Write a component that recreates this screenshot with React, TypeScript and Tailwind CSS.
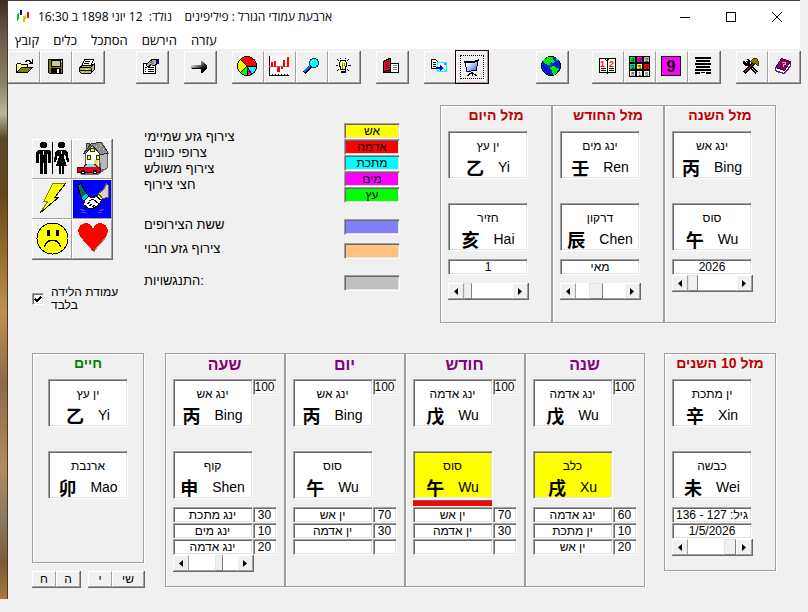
import type { ReactNode } from "react";

const sunken =
  "border border-t-[#a0a0a0] border-l-[#a0a0a0] border-r-white border-b-white shadow-[inset_1px_1px_0_#696969,inset_-1px_-1px_0_#e3e3e3]";
const raised =
  "border border-t-white border-l-white border-r-[#a0a0a0] border-b-[#a0a0a0] bg-[#f0f0f0]";
const raisedGroup = "flex border-r border-b border-[#696969]";
const etched = "border border-[#a0a0a0] shadow-[inset_1px_1px_0_#fff,1px_1px_0_#fff]";

function Icon({ children, size = 32 }: { children: ReactNode; size?: number }) {
  return (
    <svg width={size} height={size} viewBox={`0 0 ${size} ${size}`} shapeRendering="crispEdges" aria-hidden="true" className="-m-px block">
      {children}
    </svg>
  );
}

const OpenIcon = () => (
  <Icon>
    <path d="M17 10.500h1.500v-1h3v1h1v1h1M24.500 8v5M21 12.500h4" fill="none" stroke="#000" />
    <path d="M8.500 21.500V13.500L9.500 12.500H12.500L13.500 13.500H19.500V16.500H13.500L8.500 21.500Z" fill="#ffff80" stroke="#000" />
    <path d="M8.500 21.500L13.500 16.500H24.500L19.500 21.500Z" fill="#808000" stroke="#000" />
  </Icon>
);
const SaveIcon = () => (
  <Icon>
    <path d="M8.500 8.500h14v14h-13l-1-1Z" fill="#808000" stroke="#000" />
    <path d="M11 9h9v6h-9z" fill="#c8c8a0" stroke="#000" />
    <path d="M11 17h10v5H11z" />
    <path d="M17 18h2v4h-2z" fill="#f0f0f0" />
    <path d="M21 10h1v1h-1z" fill="#fff" />
  </Icon>
);
const PrintIcon = () => (
  <Icon>
    <path d="M12.500 8.500h9l-3 7h-9Z" fill="#fff" stroke="#000" />
    <path d="M13 10.500h5M12 12.500h5" stroke="#000" />
    <path d="M7.500 16.500l3-2h9l3-2v6l-4 4h-9l-2-2Z" fill="#b8b878" stroke="#000" />
    <path d="M8 16.500h11M8 19.500h11M19 17v5M19 16l3-3" stroke="#000" />
    <path d="M13 18h4v1h-4z" fill="#ffff00" />
  </Icon>
);
const PropertiesIcon = () => (
  <Icon>
    <path d="M7.500 12.500h12v10h-12z" fill="#fff" stroke="#000" />
    <path d="M9 16.500h2M12 16.500h6M9 18.500h1M12 18.500h6M9 20.500h1M12 20.500h6" stroke="#000" />
    <path d="M10 14l4-4 3-2h4v5l-4 2-2-2-2 3-2-1Z" fill="#b0b0b0" stroke="#000" />
    <path d="M20 8h3v5h-3z" fill="#000080" />
    <path d="M14 12l3-2M15 14l3-3" stroke="#606060" />
  </Icon>
);
const ArrowIcon = () => (
  <Icon>
    <defs>
      <linearGradient id="arrow" x1="0" x2="1" y1="0" y2="1">
        <stop offset="0.200" stopColor="#d0d0d0" />
        <stop offset="0.700" stopColor="#000" />
      </linearGradient>
    </defs>
    <path d="M7 14h10v-4h1l5 5v2l-5 5h-1v-4H7z" fill="url(#arrow)" />
    <path d="M8 17h9v1H8zM17 17h5l-4 4h-1z" />
  </Icon>
);
const PieIcon = () => (
  <Icon>
    <circle cx="15" cy="15" r="10" fill="#ffff00" />
    <path d="M15 15L8 8A10 10 0 0 1 25 15Z" fill="#f00" />
    <path d="M15 15H25A10 10 0 0 1 20 24Z" fill="#0ff" />
    <path d="M15 15L20 24A10 10 0 0 1 15 25Z" fill="#f0f" />
    <path d="M15 15V25A10 10 0 0 1 8 22Z" fill="#0f0" />
    <circle cx="15" cy="15" r="9.500" fill="none" stroke="#000" />
    <path d="M8 8l7 7h10M15 15l5 9M15 15v10M15 15l-7 7" fill="none" stroke="#000" />
  </Icon>
);
const ChartIcon = () => (
  <Icon>
    <path d="M5 5h20v20H5z" fill="#fff" />
    <path d="M5.500 5v20M5 24.500h20M8.500 23v2M11.500 23v2M14.500 23v2M17.500 23v2M20.500 23v2M23.500 23v2" stroke="#000" />
    <path d="M5 15.500h20" stroke="#808080" />
    <path d="M7 11h2v5H7zM10 10h2v6h-2zM13 16h3v5h-3zM17 16h2v2h-2zM19 9h2v7h-2zM23 6h2v10h-2z" fill="#f00" />
  </Icon>
);
const MagnifierIcon = () => (
  <Icon>
    <path d="M8 22l8-8" stroke="#000" strokeWidth="4" />
    <path d="M8 21l8-8" stroke="#0070ff" strokeWidth="2" />
    <circle cx="18" cy="12" r="4.500" fill="#0ff" stroke="#004060" />
    <path d="M16 9.500h2M15.500 10v2" stroke="#fff" />
  </Icon>
);
const BulbIcon = () => (
  <Icon>
    <path d="M12.500 18.500v-2l-1-2v-3l1.500-2h4l1.500 2v3l-1 2v2Z" fill="#ffff80" stroke="#000" />
    <path d="M14.500 12v6M16.500 12v3" stroke="#808000" />
    <path d="M13 18h5v4h-5z" />
    <path d="M13 19.500h4" stroke="#fff" />
    <path d="M8 14.500h2M20 14.500h3M9 8l2 2M21 8l-2 2M9 20l2-2M21 20l-2-2M12.500 7v1M17.500 7v1" stroke="#000" />
  </Icon>
);
const RedBookIcon = () => (
  <Icon>
    <path d="M14.500 12.500h8v9h-10Z" fill="#fff" stroke="#000" />
    <path d="M17 14.500h4M17 16.500h4M17 18.500h4" stroke="#808080" />
    <path d="M7.500 10.500l6-3h1v11l-7 2Z" fill="#e01030" stroke="#000" />
    <path d="M7.500 20.500l7-2v3h-7Z" fill="#800018" stroke="#000" />
    <path d="M9 12l4-2M9 14l4-2M9 16l4-2M9 18l4-2" stroke="#800018" />
  </Icon>
);
const ExportIcon = () => (
  <Icon>
    <path d="M7.500 8.500h4l2 2v7h-6z" fill="#fff" stroke="#000" />
    <path d="M9 11.500h3M9 13.500h3M9 15.500h3" stroke="#000" />
    <path d="M13.500 11.500h9v9h-9z" fill="#e8ffff" stroke="#0ff" />
    <path d="M14 20l4-4 4 4" fill="none" stroke="#0ff" />
    <path d="M20 12h2v2h-2z" fill="#8060c0" />
    <path d="M12 16h4v-2l3 3-3 3v-2h-4z" fill="#0000e0" />
  </Icon>
);
const ScreenIcon = () => (
  <Icon>
    <defs>
      <linearGradient id="screen" x1="0" x2="1" y1="0" y2="1">
        <stop offset="0.200" stopColor="#fff" />
        <stop offset="1" stopColor="#3050e0" />
      </linearGradient>
    </defs>
    <path d="M9.500 11.500l12-1-1 9-10 1Z" fill="url(#screen)" stroke="#000060" />
    <path d="M8 10h10l5-2v2l-5 2H8z" />
    <path d="M15 21h2v2h-2zM13 22h5v1h-5zM12 23h2v1h-2zM11 24h2v1h-2zM18 23h2v1h-2zM19 24h2v1h-2zM16 23h1v2h-1z" />
  </Icon>
);
const GlobeIcon = () => (
  <Icon>
    <circle cx="15" cy="15" r="9.500" fill="#0020e0" stroke="#000" />
    <path d="M9 8l3-2h4l2 1-2 1 3 2-2 2-2-1-1 2 1 2-3-1-3-1-2-2v-2Z" fill="#0e0" />
    <path d="M14 16l4-1 3 2 2 1-2 3-3 3h-1l-1-4-2-2Z" fill="#0e0" />
    <path d="M20 7l2 2 1 3-2-2Z" fill="#0e0" />
  </Icon>
);
const CalendarIcon = () => (
  <Icon>
    <path d="M7.500 7.500h16v14h-16z" fill="#fff" stroke="#000" />
    <path d="M15.500 8v15M13 8l2 2 2-2M9 17.500h5M9 19.500h5M17 17.500h5M17 19.500h5" fill="none" stroke="#000" />
    <text x="8" y="16" fontSize="9" fontWeight="bold" fill="#f00" className="font-['Liberation_Sans',sans-serif]">1</text>
    <text x="17" y="16" fontSize="9" fontWeight="bold" fill="#f00" className="font-['Liberation_Sans',sans-serif]">2</text>
  </Icon>
);
const squareCells = [
  ["4", "#00e040"], ["9", "#f0f"], ["2", "#c0c0c0"],
  ["3", "#00e090"], ["5", "#ff0"], ["7", "#f00"],
  ["8", "#fff"], ["1", "#fff"], ["6", "#fff"],
];
const LoShuIcon = () => (
  <Icon>
    <path d="M5 5h21v21H5z" />
    {squareCells.map(([n, color], i) => (
      <g key={n}>
        <rect x={6 + (i % 3) * 7} y={6 + Math.floor(i / 3) * 7} width="5" height="5" fill={color} />
        <text x={7 + (i % 3) * 7} y={11 + Math.floor(i / 3) * 7} fontSize="6" className="font-['Liberation_Sans',sans-serif]">{n}</text>
      </g>
    ))}
  </Icon>
);
const NineIcon = () => (
  <Icon>
    <path d="M5.500 5.500h19v19h-19z" fill="#f0f" stroke="#000" />
    <text x="15" y="21" textAnchor="middle" fontSize="16" fontWeight="bold" className="font-['Liberation_Sans',sans-serif]">9</text>
  </Icon>
);
const HexagramIcon = () => (
  <Icon>
    <path d="M7 6h16v2H7zM8 9h14v2H8zM7 12h16v2H7zM8 15h14v2H8zM7 18h16v2H7zM7 21h5v2H7zM13 21h4v1h-4zM18 21h5v2h-5z" />
  </Icon>
);
const ToolsIcon = () => (
  <Icon>
    <path d="M10 11l11 11" stroke="#000" strokeWidth="3" />
    <path d="M10 11l11 11" stroke="#c0c0c0" />
    <path d="M7 10h2v2h3v-2l-2-2h2l2 2v3l-2 2H9l-2-2Z" />
    <path d="M8 22l10-10" stroke="#000" strokeWidth="3" />
    <path d="M9 21l8-8" stroke="#a04020" />
    <path d="M14.500 10.500l3-3h3l2 3v4h-1l-2-2h-2Z" fill="#808000" stroke="#404000" />
  </Icon>
);
const PurpleBookIcon = () => (
  <Icon>
    <path d="M7.500 17.500l6-9 9 3v4l-6 7-9-3Z" fill="#fff" stroke="#404040" />
    <path d="M7.500 16.500l6-9 9 3-6 9Z" fill="#800080" stroke="#300030" />
    <path d="M8 20.500l8 2 6-7" fill="none" stroke="#800080" />
    <path d="M14 11.500h3v2h-2v2" fill="none" stroke="#ffc000" />
  </Icon>
);

const PeopleIcon = () => (
  <Icon size={40}>
    <circle cx="11.500" cy="6" r="3.500" />
    <path d="M6 11h11l2 2v11h-3v-9h-1v20h-3V24h-1v11H8V15H7v9H4V13Z" />
    <path d="M20 3h1v32h-1z" />
    <circle cx="29.500" cy="6" r="3.500" />
    <path d="M25 11h9l2 3 1 9h-2l-2-8-1 3 3 9h-3v8h-2v-8h-1v8h-2v-8h-3l3-9-1-3-2 8h-2l1-9Z" />
    <path d="M11 12l1 4M29 12l1 3" stroke="#f0f0f0" />
  </Icon>
);
const HouseIcon = () => (
  <Icon size={40}>
    <path d="M27.500 14.500h8v14l-7 5Z" fill="#b8b8b8" stroke="#606060" />
    <path d="M13.500 12.500l6-6 8 8v17h-14Z" fill="#fff" stroke="#606060" />
    <path d="M14.500 4.500h3v6h-3z" fill="#a0a0a0" stroke="#303030" />
    <path d="M11.500 14.500l8-10 10-1 7 11-8 1-8-9-7 8Z" fill="#909090" stroke="#303030" />
    <path d="M24 7h1v1h-1zM28 6h1v1h-1zM27 9h1v1h-1zM31 10h1v1h-1z" fill="#e0e0e0" />
    <path d="M18.500 10.500l1-1h2l1 1v2h-4zM15.500 16.500h3v4h-3zM24.500 16.500h3v4h-3z" fill="#ff0" stroke="#303030" />
    <path d="M22 21h4v6h-4z" fill="#e0e060" />
    <path d="M34 30l-8 6H10l-4-3 12-3Z" fill="#707070" />
    <path d="M5.500 28.500h6l2-3h10l3 3 2 1v4h-23Z" fill="#e00018" stroke="#600010" />
    <path d="M12 28l3-3h7l2 3Z" fill="#70e8e8" />
    <circle cx="11" cy="33" r="2.500" />
    <circle cx="23" cy="33" r="2.500" />
    <path d="M10 33h2M22 33h2" stroke="#fff" />
  </Icon>
);
const LightningIcon = () => (
  <Icon size={40}>
    <path d="M21 4H34L23 18H27L8 34L16 22H12Z" fill="#ff0" stroke="#808000" />
    <path d="M34 4L23 18H27L8 34" fill="none" stroke="#000" />
  </Icon>
);
const HandshakeIcon = () => (
  <Icon size={40}>
    <path d="M0 0h40v40H0z" fill="#00f" />
    <path d="M5.500 6.500l3-2 7 11-6 4Z" fill="#006860" stroke="#000" />
    <path d="M34.500 4.500l2 2v12l-6 1-4-5 5-4Z" fill="#d8d0c0" stroke="#606060" />
    <path d="M9 19l5-4 2 2-4 5Z" fill="#0cc" />
    <path d="M26.500 15.500l4 4-2 3-4-4Z" fill="#ff0" stroke="#404000" />
    <path d="M12.500 21.500l4-4 4 1 4-1 5 4-3 5-6 3h-4l-5-4Z" fill="#fff" stroke="#000" />
    <path d="M17 22l4-2 6 5M15 25l3-2M17 27l3-2M20 28l3-2" fill="none" stroke="#000" />
    <path d="M8 30l5 2M9 33h5M32 30l-5 2M30 33h-4" stroke="#606070" />
  </Icon>
);
const SadIcon = () => (
  <Icon size={40}>
    <circle cx="20.500" cy="19.500" r="15.500" fill="#ff0" stroke="#000" />
    <ellipse cx="16.500" cy="14" rx="2" ry="3.500" />
    <ellipse cx="25.500" cy="14" rx="2" ry="3.500" />
    <path d="M12.500 28c2-9 14-9 16 0" fill="none" stroke="#000" strokeWidth="1.500" />
  </Icon>
);
const HeartIcon = () => (
  <Icon size={40}>
    <path d="M22 34C20 27 8 21 8 13c0-9 12-10 14-1 2-9 14-8 14 1 0 8-12 14-14 21Z" fill="#909090" />
    <path d="M21 33C19 26 6 20 6 12c0-9 13-11 15-2 2-9 15-7 15 2 0 8-13 14-15 21Z" fill="#f00" />
  </Icon>
);

function Tool({ label, focused, children }: { label: string; focused?: boolean; children: ReactNode }) {
  return (
    <button
      aria-label={label}
      className={`size-8 shrink-0 ${raised} ${focused ? "outline outline-[#200] before:absolute before:inset-[3px] before:border before:border-dotted before:border-black relative" : ""}`}
    >
      {children}
    </button>
  );
}

function TitleBar() {
  return (
    <header className="bg-white font-['Open_Sans','Liberation_Sans',sans-serif]">
      <div className="flex h-8 items-center">
        <svg width="14" height="14" viewBox="0 0 14 14" shapeRendering="crispEdges" className="ml-2 shrink-0" aria-hidden="true">
          <path d="M1 4h1v7H1zM2 3h1v6H2z" fill="#0c0" />
          <path d="M4 0h2v5H4z" fill="#000080" />
          <path d="M7 6h2v6H7zM9 5h1v4H9z" fill="#cc0" />
          <path d="M11 2h2v6h-2z" fill="#f00" />
        </svg>
        <h1 dir="rtl" className="ml-2 text-xs whitespace-pre text-black">
          ארבעת עמודי הגורל : פיליפינים{"    "}נולד:{"  "}12 יוני 1898 ב 16:30
        </h1>
        <div className="ml-auto flex">
          <button aria-label="מזער" className="flex h-7 w-[46px] items-center justify-center">
            <span className="h-px w-[10px] bg-black" />
          </button>
          <button aria-label="הגדל" className="flex h-7 w-[46px] items-center justify-center">
            <span className="size-[10px] border border-black" />
          </button>
          <button aria-label="סגור" className="flex h-7 w-[46px] items-center justify-center">
            <svg width="10" height="10" viewBox="0 0 10 10" aria-hidden="true">
              <path d="M0 0l10 10M10 0L0 10" stroke="#000" />
            </svg>
          </button>
        </div>
      </div>
      <nav className="flex h-4 items-center gap-[14px] px-[7px] text-[13px] text-black">
        {["קובץ", "כלים", "הסתכל", "הירשם", "עזרה"].map((item) => (
          <button key={item}>{item}</button>
        ))}
      </nav>
    </header>
  );
}

function Toolbar() {
  return (
    <div className="mt-[2px] flex">
      <div className={raisedGroup}>
        <Tool label="פתח"><OpenIcon /></Tool>
        <Tool label="שמור"><SaveIcon /></Tool>
        <Tool label="הדפס"><PrintIcon /></Tool>
      </div>
      <div className={`${raisedGroup} ml-[31px]`}>
        <Tool label="מאפיינים"><PropertiesIcon /></Tool>
      </div>
      <div className={`${raisedGroup} ml-[15px]`}>
        <Tool label="הבא"><ArrowIcon /></Tool>
      </div>
      <div className={`${raisedGroup} ml-[15px]`}>
        <Tool label="יסודות"><PieIcon /></Tool>
        <Tool label="תרשים"><ChartIcon /></Tool>
        <Tool label="חיפוש"><MagnifierIcon /></Tool>
        <Tool label="רעיון"><BulbIcon /></Tool>
      </div>
      <div className={`${raisedGroup} ml-[15px]`}>
        <Tool label="ספר"><RedBookIcon /></Tool>
      </div>
      <div className={`${raisedGroup} ml-[15px]`}>
        <Tool label="ייצוא"><ExportIcon /></Tool>
        <Tool label="מצגת" focused><ScreenIcon /></Tool>
      </div>
      <div className={`${raisedGroup} ml-[47px]`}>
        <Tool label="עולם"><GlobeIcon /></Tool>
      </div>
      <div className={`${raisedGroup} ml-[23px]`}>
        <Tool label="לוח שנה"><CalendarIcon /></Tool>
        <Tool label="ריבוע"><LoShuIcon /></Tool>
        <Tool label="תשע"><NineIcon /></Tool>
        <Tool label="הקסגרמה"><HexagramIcon /></Tool>
      </div>
      <div className={`${raisedGroup} ml-[15px]`}>
        <Tool label="כלים"><ToolsIcon /></Tool>
        <Tool label="עזרה"><PurpleBookIcon /></Tool>
      </div>
    </div>
  );
}

type Sign = { name: string; glyph: string; latin: string; highlight?: boolean };

function Card({ sign }: { sign: Sign }) {
  return (
    <div className={`flex h-12 w-20 flex-col items-center pt-[6px] text-black ${sunken} ${sign.highlight ? "bg-[#ff0]" : "bg-white"}`}>
      <span dir="rtl" className="text-xs leading-4">{sign.name}</span>
      <div className="flex h-[26px] items-center gap-[14px]">
        <span className="font-['Noto_Sans_CJK_TC',sans-serif] text-lg leading-6 font-bold">{sign.glyph}</span>
        <span className="pt-px text-sm leading-6">{sign.latin}</span>
      </div>
    </div>
  );
}

function Field({ label, value, className }: { label: string; value: string; className: string }) {
  return (
    <input
      readOnly
      dir="rtl"
      aria-label={label}
      value={value}
      className={`block h-4 bg-white text-center text-xs leading-3 text-black outline-none ${sunken} ${className}`}
    />
  );
}

function Scroller({ label, value, thumb }: { label: string; value: number; thumb: string }) {
  const arrow = `flex h-full w-4 shrink-0 items-center justify-center ${raised}`;
  return (
    <div className="flex h-[17px] w-[81px] border-r border-b border-[#696969] bg-white">
      <button aria-label={`${label} -`} className={arrow}>
        <svg width="4" height="7" viewBox="0 0 4 7" aria-hidden="true"><path d="M4 0v7L0 3.500Z" /></svg>
      </button>
      <input
        type="range"
        aria-label={label}
        defaultValue={value}
        className={`m-0 h-full w-12 appearance-none border-b border-[#a0a0a0] bg-white [&::-webkit-slider-thumb]:h-4 [&::-webkit-slider-thumb]:appearance-none [&::-webkit-slider-thumb]:border [&::-webkit-slider-thumb]:border-t-[#e3e3e3] [&::-webkit-slider-thumb]:border-l-[#e3e3e3] [&::-webkit-slider-thumb]:border-r-[#808080] [&::-webkit-slider-thumb]:border-b-[#808080] [&::-webkit-slider-thumb]:bg-[#f0f0f0] ${thumb}`}
      />
      <button aria-label={`${label} +`} className={arrow}>
        <svg width="4" height="7" viewBox="0 0 4 7" aria-hidden="true"><path d="M0 0v7l4-3.500Z" /></svg>
      </button>
    </div>
  );
}

function LuckPanel({ title, titleClass, signs, inset, children, height }: {
  title: string; titleClass: string; signs: Sign[]; inset: string; height: string; children?: ReactNode;
}) {
  return (
    <section className={`w-28 shrink-0 ${etched} ${inset} ${height}`}>
      <h2 className={`h-[25px] w-24 text-center text-sm leading-[18px] font-bold whitespace-nowrap ${titleClass}`}>{title}</h2>
      <Card sign={signs[0]} />
      <div className="h-6" />
      <Card sign={signs[1]} />
      {children && <div className="pt-2">{children}</div>}
    </section>
  );
}

type Pillar = { title: string; signs: Sign[]; clash?: boolean; hidden: [string, string][]; scroll?: boolean };

const pillars: Pillar[] = [
  {
    title: "שעה",
    signs: [{ name: "ינג אש", glyph: "丙", latin: "Bing" }, { name: "קוף", glyph: "申", latin: "Shen" }],
    hidden: [["ינג מתכת", "30"], ["ינג מים", "10"], ["ינג אדמה", "20"]],
    scroll: true,
  },
  {
    title: "יום",
    signs: [{ name: "ינג אש", glyph: "丙", latin: "Bing" }, { name: "סוס", glyph: "午", latin: "Wu" }],
    hidden: [["ין אש", "70"], ["ין אדמה", "30"], ["", ""]],
  },
  {
    title: "חודש",
    signs: [{ name: "ינג אדמה", glyph: "戊", latin: "Wu" }, { name: "סוס", glyph: "午", latin: "Wu", highlight: true }],
    clash: true,
    hidden: [["ין אש", "70"], ["ין אדמה", "30"], ["", ""]],
  },
  {
    title: "שנה",
    signs: [{ name: "ינג אדמה", glyph: "戊", latin: "Wu" }, { name: "כלב", glyph: "戌", latin: "Xu", highlight: true }],
    hidden: [["ינג אדמה", "60"], ["ין מתכת", "10"], ["ין אש", "20"]],
  },
];

function PillarPanel({ pillar }: { pillar: Pillar }) {
  return (
    <section className={`h-[234px] w-[120px] shrink-0 pl-[7px] ${etched}`}>
      <h2 className="h-[25px] w-[104px] text-center text-base leading-[22px] font-bold text-[#800080]">{pillar.title}</h2>
      <div className="flex items-start">
        <Card sign={pillar.signs[0]} />
        <Field label={`${pillar.title} אחוז`} value="100" className="w-6" />
      </div>
      <div className="h-6" />
      <Card sign={pillar.signs[1]} />
      <div className="h-2 pt-px">
        {pillar.clash && <div className="h-[6px] w-[79px] border-t border-[#696969] bg-[#f00]" />}
      </div>
      {pillar.hidden.map(([name, value], i) => (
        <div key={i} className="flex">
          <Field label={`${pillar.title} גזע חבוי ${i + 1}`} value={name} className="w-20" />
          <Field label={`${pillar.title} ערך ${i + 1}`} value={value} className="w-6" />
        </div>
      ))}
      {pillar.scroll && <Scroller label={pillar.title} value={67} thumb="[&::-webkit-slider-thumb]:w-2" />}
    </section>
  );
}

const elements: [string, string][] = [
  ["אש", "bg-[#ff0]"],
  ["אדמה", "bg-[#f00]"],
  ["מתכת", "bg-[#0ff]"],
  ["מים", "bg-[#f0f]"],
  ["עץ", "bg-[#0f0]"],
];

function Legend() {
  const swatch = `h-4 w-14 text-center text-xs leading-[14px] text-black ${sunken}`;
  return (
    <div className="flex w-64 justify-between pt-[18px]">
      <div className="pt-[6px] text-[13px] leading-4 whitespace-nowrap text-black">
        <p>צירוף גזע שמיימי</p>
        <p>צרופי כוונים</p>
        <p>צירוף משולש</p>
        <p>חצי צירוף</p>
        <p className="mt-6">ששת הצירופים</p>
        <p className="mt-2">צירוף גזע חבוי</p>
        <p className="mt-4">התנגשויות:</p>
      </div>
      <div>
        {elements.map(([name, color]) => (
          <div key={name} className={`${swatch} ${color}`}>{name}</div>
        ))}
        <div className={`${swatch} mt-4 bg-[#8080ff]`} />
        <div className={`${swatch} mt-2 bg-[#ffc080]`} />
        <div className={`${swatch} mt-4 bg-[#c0c0c0]`} />
      </div>
    </div>
  );
}

function Topics() {
  const cell = `size-10 overflow-hidden ${raised}`;
  return (
    <div className="w-28 pt-[34px]">
      <div className="grid w-[81px] grid-cols-2 border-r border-b border-[#696969]">
        <button aria-label="יחסים" className={cell}><PeopleIcon /></button>
        <button aria-label="רכוש" className={cell}><HouseIcon /></button>
        <button aria-label="אנרגיה" className={cell}><LightningIcon /></button>
        <button aria-label="שותפות" className={cell}><HandshakeIcon /></button>
        <button aria-label="עצב" className={cell}><SadIcon /></button>
        <button aria-label="אהבה" className={cell}><HeartIcon /></button>
      </div>
      <label className="mt-[26px] flex items-center gap-[7px] text-xs leading-[13px] text-black">
        <span className="relative size-3 shrink-0">
          <input type="checkbox" defaultChecked className={`peer block size-3 appearance-none bg-white ${sunken}`} />
          <svg viewBox="0 0 12 12" shapeRendering="crispEdges" className="pointer-events-none absolute inset-0 hidden size-3 peer-checked:block" aria-hidden="true">
            <path d="M3 6l2 2 4-4" fill="none" stroke="#000" strokeWidth="2" />
          </svg>
        </span>
        <span>עמודת הלידה<br />בלבד</span>
      </label>
    </div>
  );
}

export default function App() {
  const small = `h-4 text-xs leading-[13px] text-black ${raised}`;
  return (
    <div className="flex min-h-screen bg-[#f0f0f0] font-['Liberation_Sans','Noto_Sans_CJK_TC',sans-serif]">
      <div className="h-[599px] w-2 shrink-0 border-r border-[#4a3a20] bg-[linear-gradient(to_bottom,#3c2c1c_0%,#6b5a48_6%,#8a8468_14%,#b8b8a0_19%,#5a4a2c_23%,#604818_32%,#8a6428_40%,#c09050_52%,#8a6c48_64%,#b08c58_78%,#8a7c68_86%,#7a5c34_94%,#a8783c_100%)]" />
      <div className="mr-2 min-w-0 grow border-t border-[#4a4038]">
        <TitleBar />
        <Toolbar />
        <main className="px-6 pt-[21px]">
          <div className="flex items-start justify-between">
            <div className="flex">
              <Topics />
              <Legend />
            </div>
            <div className="flex">
              <LuckPanel title="מזל היום" titleClass="text-[#c00000]" inset="pl-[7px]" height="h-[218px]"
                signs={[{ name: "ין עץ", glyph: "乙", latin: "Yi" }, { name: "חזיר", glyph: "亥", latin: "Hai" }]}>
                <Field label="יום" value="1" className="mb-2 w-20" />
                <Scroller label="יום" value={0} thumb="[&::-webkit-slider-thumb]:w-2" />
              </LuckPanel>
              <LuckPanel title="מזל החודש" titleClass="text-[#c00000]" inset="pl-[7px]" height="h-[218px]"
                signs={[{ name: "ינג מים", glyph: "壬", latin: "Ren" }, { name: "דרקון", glyph: "辰", latin: "Chen" }]}>
                <Field label="חודש" value="מאי" className="mb-2 w-20" />
                <Scroller label="חודש" value={38} thumb="[&::-webkit-slider-thumb]:w-[14px]" />
              </LuckPanel>
              <LuckPanel title="מזל השנה" titleClass="text-[#c00000]" inset="pl-[7px]" height="h-[218px]"
                signs={[{ name: "ינג אש", glyph: "丙", latin: "Bing" }, { name: "סוס", glyph: "午", latin: "Wu" }]}>
                <Field label="שנה" value="2026" className="w-20" />
                <Scroller label="שנה" value={0} thumb="[&::-webkit-slider-thumb]:w-[10px]" />
              </LuckPanel>
            </div>
          </div>
          <div className="mt-[30px] flex items-start justify-between">
            <div>
              <LuckPanel title="חיים" titleClass="text-[#008000]" inset="pl-[15px] [&>h2]:w-20" height="h-[210px]"
                signs={[{ name: "ין עץ", glyph: "乙", latin: "Yi" }, { name: "ארנבת", glyph: "卯", latin: "Mao" }]} />
              <div className="mt-2 flex gap-[7px]">
                <div className={raisedGroup}>
                  <button className={`w-6 ${small}`}>ח</button>
                  <button className={`w-6 ${small}`}>ה</button>
                </div>
                <div className={raisedGroup}>
                  <button className={`w-6 ${small}`}>י</button>
                  <button className={`w-8 ${small}`}>שי</button>
                </div>
              </div>
            </div>
            <div className="flex">
              {pillars.map((pillar) => (
                <PillarPanel key={pillar.title} pillar={pillar} />
              ))}
            </div>
            <LuckPanel title="מזל 10 השנים" titleClass="text-[#c00000]" inset="pl-[7px]" height="h-[218px]"
              signs={[{ name: "ין מתכת", glyph: "辛", latin: "Xin" }, { name: "כבשה", glyph: "未", latin: "Wei" }]}>
              <Field label="גיל" value="גיל: 127 - 136" className="w-20" />
              <Field label="תאריך" value="1/5/2026" className="w-20" />
              <Scroller label="עשר שנים" value={100} thumb="[&::-webkit-slider-thumb]:w-3" />
            </LuckPanel>
          </div>
        </main>
      </div>
    </div>
  );
}
